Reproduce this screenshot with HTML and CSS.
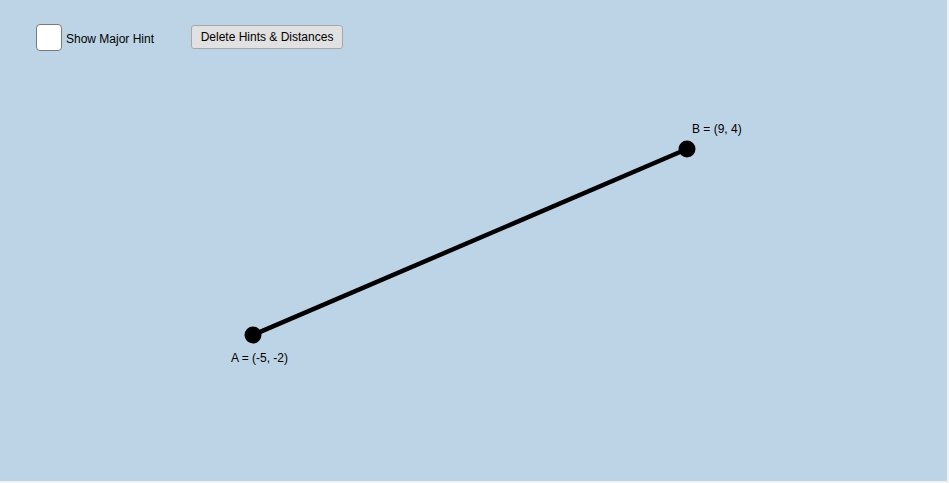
FILE: index.html
```html
<!DOCTYPE html>
<html>
<head>
<meta charset="utf-8">
<link rel="stylesheet" href="styles.css">
</head>
<body>
<div class="app">
  <div class="toolbar">
    <label class="check">
      <span class="box"></span>
      <span class="check-label">Show Major Hint</span>
    </label>
    <button class="btn">Delete Hints &amp; Distances</button>
  </div>
  <svg class="canvas" width="947" height="481" viewBox="0 0 947 481">
    <line x1="253" y1="335" x2="687" y2="149" stroke="#000" stroke-width="4.5" />
    <circle cx="253" cy="335" r="8.5" fill="#000" />
    <circle cx="687" cy="149" r="8.5" fill="#000" />
    <text x="692" y="133" class="lbl">B = (9, 4)</text>
    <text x="231" y="362" class="lbl">A = (-5, -2)</text>
  </svg>
</div>
</body>
</html>
```
FILE: styles.css
```css
html, body {
  margin: 0;
  padding: 0;
  background: #eef3f8;
  width: 949px;
  height: 483px;
  overflow: hidden;
  font-family: "Liberation Sans", Arial, sans-serif;
}
.app {
  position: relative;
  width: 947px;
  height: 481px;
  background: #bdd4e7;
}
.toolbar {
  display: flex;
  align-items: center;
  padding: 24px 0 0 36px;
  position: relative;
  z-index: 1;
}
.check {
  display: flex;
  align-items: center;
}
.box {
  width: 24px;
  height: 25px;
  background: #fff;
  border: 1px solid #7a7a7a;
  border-radius: 4px;
}
.check-label {
  font-size: 12px;
  color: #000;
  margin-left: 4px;
  margin-top: 3px;
}
.btn {
  margin-left: 37px;
  margin-top: -2px;
  height: 24px;
  width: 152px;
  padding: 0;
  font-family: "Liberation Sans", Arial, sans-serif;
  font-size: 12px;
  color: #000;
  background: #e1e1e1;
  border: 1px solid #a8a8a8;
  border-radius: 3px;
}
.canvas {
  position: absolute;
  left: 0;
  top: 0;
}
.lbl {
  font-size: 12px;
  fill: #000;
  font-family: "Liberation Sans", Arial, sans-serif;
}
```
